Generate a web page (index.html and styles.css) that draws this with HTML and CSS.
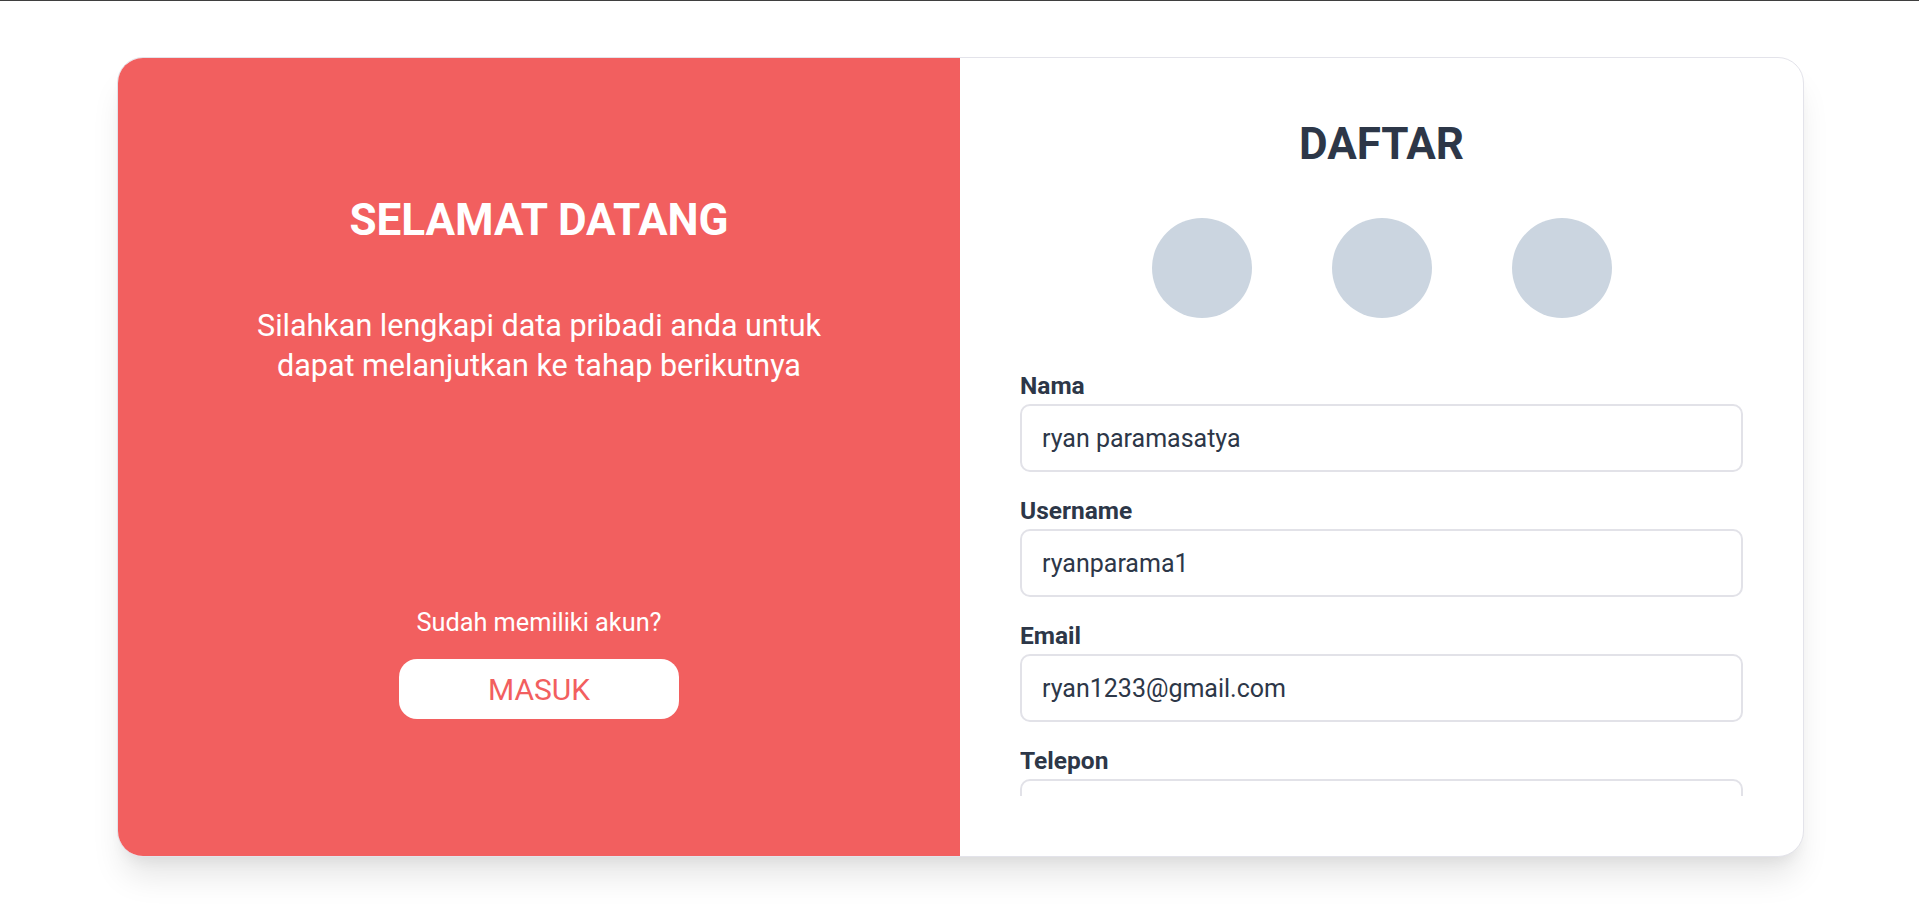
FILE: index.html
```html
<!DOCTYPE html>
<html lang="id">
<head>
<meta charset="utf-8">
<title>Daftar</title>
<link rel="stylesheet" href="styles.css">
</head>
<body>
<div class="page">
  <div class="card">
    <section class="welcome">
      <div class="welcome-top">
        <h2 class="welcome-title">SELAMAT DATANG</h2>
        <p class="welcome-text">Silahkan lengkapi data pribadi anda untuk dapat melanjutkan ke tahap berikutnya</p>
      </div>
      <div class="welcome-bottom">
        <p class="welcome-question">Sudah memiliki akun?</p>
        <button class="btn-login" type="button">MASUK</button>
      </div>
    </section>
    <section class="register">
      <h1 class="register-title">DAFTAR</h1>
      <div class="steps">
        <span class="step"></span>
        <span class="step"></span>
        <span class="step"></span>
      </div>
      <form class="form">
        <div class="field">
          <label class="field-label" for="nama">Nama</label>
          <input class="field-input" id="nama" type="text" value="ryan paramasatya">
        </div>
        <div class="field">
          <label class="field-label" for="username">Username</label>
          <input class="field-input" id="username" type="text" value="ryanparama1">
        </div>
        <div class="field">
          <label class="field-label" for="email">Email</label>
          <input class="field-input" id="email" type="email" value="ryan1233@gmail.com">
        </div>
        <div class="field">
          <label class="field-label" for="telepon">Telepon</label>
          <input class="field-input" id="telepon" type="tel" value="">
        </div>
      </form>
    </section>
  </div>
</div>
</body>
</html>
```
FILE: styles.css
```css
* { box-sizing: border-box; }
html, body { margin: 0; padding: 0; }
body {
  font-family: Roboto, "Liberation Sans", Arial, sans-serif;
  background: #ffffff;
  border-top: 1px solid #3f3f3f;
  height: 909px;
  overflow: hidden;
}
.page {
  padding: 56px 0 0 2px;
}
.card {
  width: 1687px;
  height: 800px;
  margin: 0 auto;
  display: flex;
  border: 1px solid #e3e3ea;
  border-radius: 26px;
  overflow: hidden;
  background: #ffffff;
  box-shadow: 0 25px 32px -6px rgba(0,0,0,0.10), 0 10px 14px -6px rgba(0,0,0,0.06);
}
.welcome {
  flex: 0 0 842px;
  background: #f25f5f;
  color: #ffffff;
  display: flex;
  flex-direction: column;
  justify-content: space-between;
  align-items: center;
  text-align: center;
  padding: 136px 0 137px;
}
.welcome-top { display: flex; flex-direction: column; align-items: center; }
.welcome-title {
  margin: 0;
  font-size: 44px;
  line-height: 52px;
  font-weight: 700;
}
.welcome-text {
  margin: 60px 0 0;
  width: 620px;
  font-size: 30.5px;
  line-height: 40px;
  font-weight: 400;
}
.welcome-bottom { display: flex; flex-direction: column; align-items: center; }
.welcome-question {
  margin: 0;
  font-size: 25.3px;
  line-height: 35px;
}
.btn-login {
  margin-top: 19px;
  width: 280px;
  height: 60px;
  border: none;
  border-radius: 18px;
  background: #ffffff;
  color: #f25f5f;
  font-family: inherit;
  font-size: 30px;
  font-weight: 400;
  padding: 0;
}
.register {
  flex: 1;
  display: flex;
  flex-direction: column;
  padding: 60px 60px 60px 60px;
  color: #2d3748;
}
.register-title {
  margin: 0;
  text-align: center;
  font-size: 44px;
  line-height: 52px;
  font-weight: 700;
}
.steps {
  margin-top: 48px;
  display: flex;
  justify-content: center;
  gap: 80px;
}
.step {
  width: 100px;
  height: 100px;
  border-radius: 50%;
  background: #cbd5e0;
}
.form {
  margin-top: 50px;
  flex: 1;
  overflow: hidden;
}
.field { margin-bottom: 21px; }
.field-label {
  display: block;
  font-size: 24.5px;
  line-height: 36px;
  font-weight: 700;
}
.field-input {
  display: block;
  width: 100%;
  height: 68px;
  border: 2px solid #e2e2e8;
  border-radius: 10px;
  padding: 0 20px;
  font-family: inherit;
  font-size: 25px;
  color: #2d3748;
  background: #ffffff;
  outline: none;
}
```
